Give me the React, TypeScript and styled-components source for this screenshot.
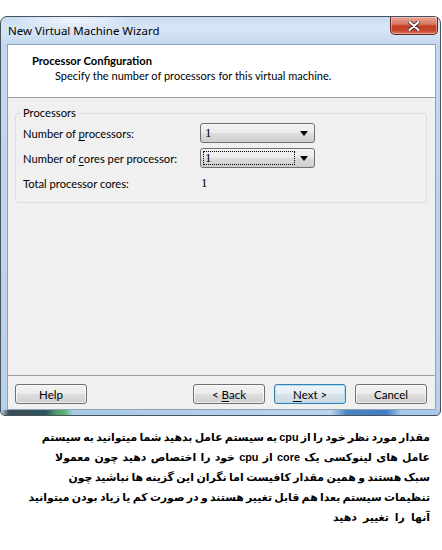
import React from "react";
import styled, { createGlobalStyle } from "styled-components";

const GlobalStyle = createGlobalStyle`
  html, body { margin: 0; padding: 0; background: #ffffff; }
  body {
    width: 442px;
    height: 550px;
    overflow: hidden;
    font-family: Lato, "Noto Sans", "Liberation Sans", sans-serif;
    color: #000;
  }
`;

const Page = styled.div`
  padding-top: 16px;
  display: flex;
  flex-direction: column;
`;

const Window = styled.div`
  width: 441px;
  height: 400px;
  box-sizing: border-box;
  border: 1px solid #48525c;
  border-radius: 7px 7px 5px 5px;
  padding: 0 4px 5px 6px;
  display: flex;
  flex-direction: column;
  background:
    linear-gradient(
        to right,
        #b9d0ea 0px,
        #3a4a52 8px,
        #2f5560 45px,
        #4f9a6a 55px,
        #55b070 63px,
        #a9c9e6 72px,
        #bcd4ee 330px,
        #4d86c4 345px,
        #3f7bc0 385px,
        #a9c8ea 400px
      )
      left bottom / 100% 5px no-repeat,
    radial-gradient(ellipse 60px 10px at 70px 3px, rgba(255, 255, 255, 0.7), rgba(255, 255, 255, 0)),
    linear-gradient(
      180deg,
      #c9dcf2 0px,
      #d8e6f6 12px,
      #c4d8ef 28px,
      #b9d0ea 100%
    );
`;

const TitleBar = styled.div`
  height: 27px;
  display: flex;
  align-items: flex-start;
  justify-content: space-between;
`;

const Title = styled.div`
  padding-top: 6px;
  padding-left: 1px;
  font-family: "Noto Sans", sans-serif;
  font-size: 11.5px;
  line-height: 15px;
  color: #000;
`;

const CloseButton = styled.div`
  width: 48px;
  height: 18px;
  margin-right: -2px;
  box-sizing: border-box;
  border: 1px solid #5e2a22;
  border-top: none;
  border-radius: 0 0 5px 5px;
  display: flex;
  align-items: center;
  justify-content: center;
  background: linear-gradient(
    180deg,
    #e9a99a 0%,
    #d97a66 40%,
    #c23e25 55%,
    #c9452c 80%,
    #e07a5c 100%
  );
  box-shadow: inset 0 0 0 1px rgba(255, 220, 210, 0.45);
`;

const Client = styled.div`
  flex: 1;
  display: flex;
  flex-direction: column;
  border: 1px solid #8ea2b8;
  background: #f0f0f0;
`;

const Header = styled.div`
  background: #ffffff;
  border-bottom: 1px solid #a0a0a0;
  padding: 8px 0 0 24px;
  box-sizing: content-box;
  height: 44px;
  font-size: 11.2px;
  line-height: 15px;
`;

const HeaderTitle = styled.div`
  font-weight: 700;
`;

const HeaderSub = styled.div`
  padding-left: 23px;
  font-size: 11px;
`;

const Body = styled.div`
  flex: 1;
  padding: 8px 8px 0 7px;
`;

const GroupBox = styled.fieldset`
  margin: 0;
  padding: 3px 7px 9px 7px;
  border: 1px solid #d5dfe5;
  border-radius: 3px;
  display: grid;
  grid-template-columns: 177px 115px;
  grid-auto-rows: 20px;
  row-gap: 5px;
  align-items: center;
  font-size: 11.2px;
`;

const Legend = styled.legend`
  padding: 0 2px;
  margin-left: -2px;
  line-height: 14px;
  font-size: 11.2px;
`;

const Label = styled.div`
  line-height: 15px;
  white-space: nowrap;
`;

const Mn = styled.span`
  text-decoration: underline;
  text-underline-offset: 2px;
`;

const Combo = styled.div`
  height: 20px;
  box-sizing: border-box;
  border: 1px solid #707070;
  border-radius: 3px;
  background: linear-gradient(180deg, #f2f2f2 0%, #ebebeb 48%, #dddddd 52%, #cfcfcf 100%);
  display: flex;
  align-items: center;
  padding: 0 6px 0 2px;
  gap: 5px;
`;

const ComboValue = styled.div<{ $focused?: boolean }>`
  flex: 1;
  height: 14px;
  line-height: 12px;
  padding-left: 1px;
  box-sizing: border-box;
  font-family: "Liberation Serif", serif;
  font-size: 13px;
  border: 1px dotted ${(p) => (p.$focused ? "#000" : "transparent")};
`;

const Arrow = styled.div`
  width: 0;
  height: 0;
  border-left: 4px solid transparent;
  border-right: 4px solid transparent;
  border-top: 5px solid #000;
`;

const Value = styled.div`
  padding-left: 1px;
  font-family: "Liberation Serif", serif;
  font-size: 13px;
`;

const ButtonBar = styled.div`
  height: 34px;
  box-sizing: border-box;
  border-top: 1px solid #a0a0a0;
  padding: 8px 8px 0 7px;
  display: flex;
  align-items: flex-start;
  gap: 9px;
`;

const Spacer = styled.div`
  flex: 1;
`;

const Button = styled.div<{ $default?: boolean }>`
  width: 72px;
  height: 20px;
  box-sizing: border-box;
  border: 1px solid ${(p) => (p.$default ? "#3c7fb1" : "#707070")};
  border-radius: 3px;
  display: flex;
  align-items: center;
  justify-content: center;
  font-size: 11.5px;
  white-space: pre;
  background: ${(p) =>
    p.$default
      ? "linear-gradient(180deg, #f0f5f9 0%, #e6eef4 48%, #d9e3ea 52%, #cdd8e0 100%)"
      : "linear-gradient(180deg, #f2f2f2 0%, #ebebeb 48%, #dddddd 52%, #cfcfcf 100%)"};
  box-shadow: inset 0 0 0 1px
    ${(p) => (p.$default ? "#a9dcf5" : "rgba(255,255,255,0.7)")};
`;

const Note = styled.div`
  padding: 11px 12px 0 12px;
  direction: rtl;
  text-align: right;
  font-family: "Liberation Sans", "DejaVu Sans", sans-serif;
  font-weight: 700;
  font-size: 10.9px;
  line-height: 20px;
  color: #000;
`;

const NoteLine = styled.div<{ $ws: number }>`
  white-space: nowrap;
  word-spacing: ${(p) => p.$ws}px;
`;

const CloseGlyph = () => (
  <svg width="12" height="10" viewBox="0 0 12 10">
    <path
      d="M1.5 1 L10.5 9 M10.5 1 L1.5 9"
      stroke="#3a2a28"
      strokeWidth="3.6"
      strokeLinecap="round"
    />
    <path
      d="M1.5 1 L10.5 9 M10.5 1 L1.5 9"
      stroke="#ffffff"
      strokeWidth="2"
      strokeLinecap="round"
    />
  </svg>
);

export default function App() {
  return (
    <>
      <GlobalStyle />
      <Page>
        <Window>
          <TitleBar>
            <Title>New Virtual Machine Wizard</Title>
            <CloseButton>
              <CloseGlyph />
            </CloseButton>
          </TitleBar>
          <Client>
            <Header>
              <HeaderTitle>Processor Configuration</HeaderTitle>
              <HeaderSub>Specify the number of processors for this virtual machine.</HeaderSub>
            </Header>
            <Body>
              <GroupBox>
                <Legend>Processors</Legend>
                <Label>
                  Number of <Mn>p</Mn>rocessors:
                </Label>
                <Combo>
                  <ComboValue>1</ComboValue>
                  <Arrow />
                </Combo>
                <Label>
                  Number of <Mn>c</Mn>ores per processor:
                </Label>
                <Combo>
                  <ComboValue $focused>1</ComboValue>
                  <Arrow />
                </Combo>
                <Label>Total processor cores:</Label>
                <Value>1</Value>
              </GroupBox>
            </Body>
            <ButtonBar>
              <Button>Help</Button>
              <Spacer />
              <Button>
                {"< "}
                <Mn>B</Mn>
                {"ack"}
              </Button>
              <Button $default>
                <Mn>N</Mn>
                {"ext >"}
              </Button>
              <Button>Cancel</Button>
            </ButtonBar>
          </Client>
        </Window>
        <Note>
          <NoteLine $ws={-0.8}>مقدار مورد نظر خود را از cpu به سیستم عامل بدهید شما میتوانید به سیستم</NoteLine>
          <NoteLine $ws={1.2}>عامل های لینوکسی یک core از cpu خود را اختصاص دهید چون معمولا</NoteLine>
          <NoteLine $ws={-0.55}>سبک هستند و همین مقدار کافیست اما نگران این گزینه ها نباشید چون</NoteLine>
          <NoteLine $ws={-0.73}>تنظیمات سیستم بعدا هم قابل تغییر هستند و در صورت کم یا زیاد بودن میتوانید</NoteLine>
          <NoteLine $ws={3}>آنها را تغییر دهید</NoteLine>
        </Note>
      </Page>
    </>
  );
}
